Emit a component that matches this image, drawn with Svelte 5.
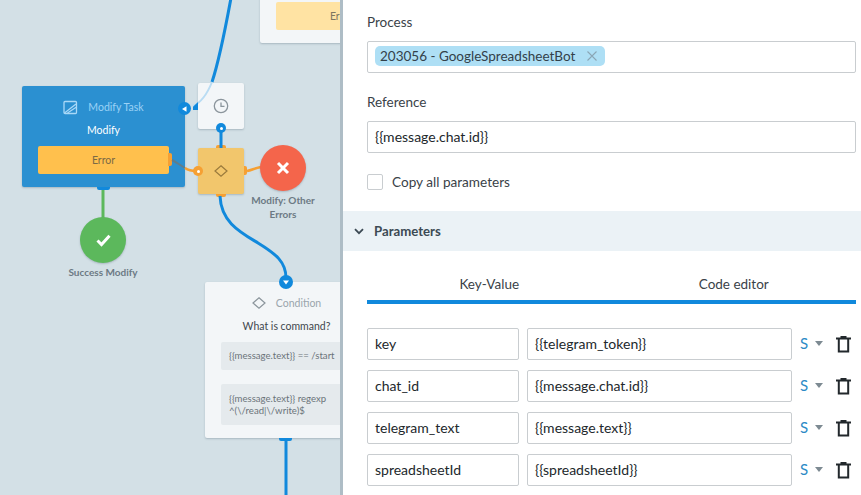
<script>
  const params = [
    { key: 'key', value: '{{telegram_token}}' },
    { key: 'chat_id', value: '{{message.chat.id}}' },
    { key: 'telegram_text', value: '{{message.text}}' },
    { key: 'spreadsheetId', value: '{{spreadsheetId}}' }
  ];
</script>

<div class="page">
  <div class="canvas">
    <svg class="edges" width="340" height="495" viewBox="0 0 340 495">
      <path d="M231 -2C226 25 220 58 212 82" class="blue" />
      <path d="M212 82C206 97 200 103 193 106" class="fade" />
      <path d="M221 128V148" class="blue" />
      <path d="M220 196C221 222 240 232 258 243C276 254 286 262 286 278" class="blue" />
      <path d="M286 438V495" class="blue" />
      <path d="M103 190V218" class="green" />
      <path d="M172 160C176 162 180 165 185 168" class="dark" />
      <path d="M185 168C188 170 191 171 196 171" class="orange" />
      <path d="M247 171C252 170 255 168 261 167" class="orange" />
    </svg>

    <div class="node top-node">
      <div class="bar yellow-light">Error</div>
    </div>

    <div class="node task">
      <div class="head">
        <svg width="15" height="15" viewBox="0 0 15 15" fill="none" stroke="#a9d8f7" stroke-width="1.3">
          <rect x="1" y="1.5" width="12.5" height="12" rx="1" />
          <path d="M1.5 13L13 4M4.5 13L13.5 7" />
        </svg>
        <span>Modify Task</span>
      </div>
      <div class="title">Modify</div>
      <div class="error-bar">Error</div>
    </div>
    <div class="tab tab-task"></div>
    <div class="tab tab-error"></div>

    <div class="node timer">
      <svg width="16" height="16" viewBox="0 0 16 16" fill="none" stroke="#8b959c" stroke-width="1.3">
        <circle cx="8" cy="8" r="6.7" />
        <path d="M8 4.5V8.4H11.5" />
      </svg>
    </div>

    <div class="node switch">
      <svg width="14" height="12" viewBox="0 0 14 12" fill="none" stroke="#9a7a3c" stroke-width="1.2">
        <path d="M7 .8L13 6L7 11.2L1 6Z" />
      </svg>
    </div>
    <div class="tab tab-sw-top"></div>
    <div class="tab tab-sw-bottom"></div>
    <div class="tab tab-sw-right"></div>

    <div class="port port-left">
      <svg width="5" height="6" viewBox="0 0 5 6"><path d="M0 3L4.5 .3V5.7Z" fill="#fff" /></svg>
    </div>
    <div class="wedge"></div>
    <div class="port port-timer"><i></i></div>
    <div class="port port-orange"><i></i></div>
    <div class="port port-cond">
      <svg width="6" height="5" viewBox="0 0 6 5"><path d="M0 .5H6L3 4.5Z" fill="#fff" /></svg>
    </div>

    <div class="circle red">
      <svg width="14" height="14" viewBox="0 0 14 14" stroke="#fff" stroke-width="3" fill="none">
        <path d="M2 2L12 12M12 2L2 12" />
      </svg>
    </div>
    <div class="caption cap-errors">Modify: Other<br />Errors</div>

    <div class="circle success">
      <svg width="15" height="13" viewBox="0 0 15 13" stroke="#fff" stroke-width="3" fill="none">
        <path d="M1.5 6.5L5.5 10.5L13.5 1.8" />
      </svg>
    </div>
    <div class="caption cap-success">Success Modify</div>

    <div class="node cond">
      <div class="head">
        <svg width="14" height="12" viewBox="0 0 14 12" fill="none" stroke="#8b959c" stroke-width="1.2">
          <path d="M7 .8L13 6L7 11.2L1 6Z" />
        </svg>
        <span>Condition</span>
      </div>
      <div class="title">What is command?</div>
      <div class="rule one">{'{{message.text}}'} == /start</div>
      <div class="rule two">{'{{message.text}}'} regexp<br />^(\/read|\/write)$</div>
    </div>
    <div class="tab tab-cond"></div>
  </div>

  <div class="panel">
    <div class="form">
      <label class="label" for="process">Process</label>
      <div class="input" id="process">
        <span class="tag">203056 - GoogleSpreadsheetBot
          <svg width="10" height="10" viewBox="0 0 10 10" stroke="#8aa6b5" stroke-width="1.1" fill="none">
            <path d="M.5 .5L9.5 9.5M9.5 .5L.5 9.5" />
          </svg>
        </span>
      </div>
      <label class="label ref" for="reference">Reference</label>
      <div class="input text" id="reference">{'{{message.chat.id}}'}</div>
      <div class="check">
        <span class="box"></span>
        <span>Copy all parameters</span>
      </div>
    </div>

    <div class="section">
      <svg width="10" height="7" viewBox="0 0 10 7" fill="none" stroke="#3c4a54" stroke-width="1.8">
        <path d="M1 1.2L5 5.2L9 1.2" />
      </svg>
      <span>Parameters</span>
    </div>

    <div class="body">
      <div class="tabs">
        <span>Key-Value</span>
        <span>Code editor</span>
      </div>
      <div class="rows">
        {#each params as p}
          <div class="row">
            <div class="input text key">{p.key}</div>
            <div class="input text val">{p.value}</div>
            <span class="type">S</span>
            <span class="caret"></span>
            <svg class="trash" width="15" height="17" viewBox="0 0 15 17" fill="none" stroke="#22282c" stroke-width="2">
              <path d="M0 2.5H15M5.5 2.5V.6H9.5V2.5M2.8 2.5V15.5H12.2V2.5" />
            </svg>
          </div>
        {/each}
      </div>
    </div>
  </div>
</div>

<style>
  :global(body) {
    margin: 0;
  }
  .page {
    display: flex;
    width: 861px;
    height: 495px;
    overflow: hidden;
    font-family: Lato, "Noto Sans", sans-serif;
    color: #3a4248;
  }

  /* diagram */
  .canvas {
    position: relative;
    flex: 0 0 340px;
    height: 495px;
    overflow: hidden;
    background: #d3e0e6;
  }
  .edges {
    position: absolute;
    left: 0;
    top: 0;
    z-index: 1;
    fill: none;
  }
  .blue { stroke: #1189dc; stroke-width: 3; }
  .fade { stroke: #b9dcf3; stroke-width: 2; }
  .green { stroke: #5cb85c; stroke-width: 3; }
  .orange { stroke: #f6a033; stroke-width: 2.5; }
  .dark { stroke: #5f7d8c; stroke-width: 2; }
  .node {
    position: absolute;
    box-sizing: border-box;
    border-radius: 2px;
    box-shadow: 0 1px 2px rgba(70, 90, 105, 0.3);
  }
  .top-node {
    left: 260px;
    top: -10px;
    width: 163px;
    height: 53px;
    background: #f3f6f8;
  }
  .bar {
    position: absolute;
    left: 16px;
    top: 12px;
    width: 131px;
    height: 28px;
    border-radius: 2px;
    font-size: 10.5px;
    line-height: 28px;
    text-align: center;
    color: #7d7660;
  }
  .yellow-light {
    background: #ffe3a3;
  }
  .task {
    left: 22px;
    top: 86px;
    width: 163px;
    height: 101px;
    padding-top: 13px;
    background: #2b90d1;
  }
  .head {
    display: flex;
    justify-content: center;
    align-items: center;
    gap: 10px;
    height: 16px;
    font-size: 10.5px;
    color: #9bd2f6;
  }
  .title {
    margin-top: 7px;
    font-size: 10.5px;
    line-height: 16px;
    text-align: center;
    color: #fff;
  }
  .error-bar {
    height: 28px;
    margin: 8px 16px 0;
    border-radius: 2px;
    background: #ffc04d;
    font-size: 10.5px;
    line-height: 28px;
    text-align: center;
    color: #7a6a45;
  }
  .timer,
  .switch {
    left: 198px;
    width: 46px;
    height: 46px;
    display: flex;
    align-items: center;
    justify-content: center;
  }
  .timer {
    top: 83px;
    background: #f3f6f8;
  }
  .switch {
    top: 148px;
    background: #f2c66c;
  }
  .tab {
    position: absolute;
    background: #f6a033;
  }
  .tab-task {
    left: 97px;
    top: 187px;
    width: 13px;
    height: 3px;
    border-radius: 0 0 2px 2px;
    background: #1189dc;
  }
  .tab-error {
    left: 168px;
    top: 153px;
    width: 4px;
    height: 13px;
    border-radius: 0 2px 2px 0;
  }
  .tab-sw-top {
    left: 216px;
    top: 145px;
    width: 10px;
    height: 3px;
    border-radius: 2px 2px 0 0;
  }
  .tab-sw-bottom {
    left: 216px;
    top: 194px;
    width: 10px;
    height: 3px;
    border-radius: 0 0 2px 2px;
  }
  .tab-sw-right {
    left: 244px;
    top: 166px;
    width: 3px;
    height: 9px;
    border-radius: 0 2px 2px 0;
  }
  .tab-cond {
    left: 279px;
    top: 438px;
    width: 13px;
    height: 3px;
    border-radius: 0 0 2px 2px;
    background: #1189dc;
  }
  .port {
    position: absolute;
    z-index: 2;
    display: flex;
    align-items: center;
    justify-content: center;
    border-radius: 50%;
    background: #1189dc;
  }
  .port i {
    width: 3px;
    height: 3px;
    border-radius: 50%;
    background: #fff;
  }
  .port-left {
    left: 178px;
    top: 102px;
    width: 13px;
    height: 13px;
  }
  .wedge {
    position: absolute;
    z-index: 2;
    left: 193px;
    top: 102px;
    width: 5px;
    height: 8px;
    background: #1189dc;
    clip-path: polygon(100% 0, 100% 100%, 0 100%, 0 60%);
  }
  .port-timer {
    left: 216px;
    top: 123px;
    width: 10px;
    height: 10px;
  }
  .port-orange {
    left: 193px;
    top: 166px;
    width: 10px;
    height: 10px;
    background: #f6a033;
  }
  .port-cond {
    left: 279px;
    top: 275px;
    width: 14px;
    height: 14px;
  }
  .circle {
    position: absolute;
    z-index: 2;
    display: flex;
    align-items: center;
    justify-content: center;
    width: 46px;
    height: 46px;
    border-radius: 50%;
    box-shadow: 0 1px 2px rgba(70, 90, 105, 0.3);
  }
  .red {
    left: 260px;
    top: 145px;
    background: #f4654b;
  }
  .success {
    left: 80px;
    top: 217px;
    background: #5cb85c;
  }
  .caption {
    position: absolute;
    width: 110px;
    font-size: 10px;
    font-weight: 700;
    line-height: 14px;
    text-align: center;
    color: #6c7a84;
  }
  .cap-errors {
    left: 228px;
    top: 193px;
  }
  .cap-success {
    left: 48px;
    top: 265px;
  }
  .cond {
    left: 205px;
    top: 282px;
    width: 163px;
    height: 156px;
    padding-top: 13px;
    background: #f3f6f8;
  }
  .cond .head {
    color: #9aa5ac;
  }
  .cond .title {
    color: #3f474d;
  }
  .rule {
    margin: 0 16px;
    padding: 0 8px;
    border-radius: 2px;
    background: #e5eaed;
    font-size: 9.6px;
    line-height: 12px;
    color: #6b747a;
  }
  .one {
    margin-top: 8px;
    padding-top: 8px;
    height: 20px;
  }
  .two {
    margin-top: 14px;
    padding-top: 9px;
    height: 32px;
  }

  /* side panel */
  .panel {
    flex: 1;
    box-sizing: border-box;
    height: 495px;
    overflow: hidden;
    border-left: 3px solid #aebdc6;
    background: #fff;
  }
  .form {
    padding: 12px 5px 0 24px;
    height: 199px;
  }
  .label {
    display: block;
    height: 20px;
    margin-bottom: 9px;
    font-size: 13.5px;
    line-height: 20px;
  }
  .ref {
    margin-top: 19px;
  }
  .input {
    box-sizing: border-box;
    height: 32px;
    padding: 3px 7px;
    border: 1px solid #c9cdd0;
    border-radius: 2px;
    background: #fff;
  }
  .text {
    padding: 0 7px;
    font-size: 14px;
    line-height: 30px;
    color: #22282c;
  }
  .tag {
    display: inline-flex;
    align-items: center;
    gap: 12px;
    height: 20px;
    padding: 0 8px 0 5px;
    border-radius: 5px;
    background: #aedff5;
    font-size: 13.5px;
    color: #33414a;
  }
  .check {
    display: flex;
    align-items: center;
    gap: 9px;
    margin-top: 21px;
    font-size: 13.6px;
  }
  .box {
    box-sizing: border-box;
    width: 16px;
    height: 16px;
    border: 1px solid #c9cdd0;
    border-radius: 2px;
  }
  .section {
    display: flex;
    align-items: center;
    gap: 10px;
    height: 40px;
    padding-left: 11px;
    background: #ebf2f6;
    font-size: 13.2px;
    font-weight: 700;
    color: #3c4a54;
  }
  .body {
    padding: 0 5px 0 24px;
  }
  .tabs {
    display: grid;
    grid-template-columns: 1fr 1fr;
    height: 49px;
    border-bottom: 4px solid #1189dc;
    font-size: 13.5px;
    line-height: 66px;
    text-align: center;
  }
  .rows {
    display: flex;
    flex-direction: column;
    gap: 10px;
    margin-top: 24px;
  }
  .row {
    display: flex;
    align-items: center;
  }
  .key {
    width: 152px;
  }
  .val {
    width: 265px;
    margin-left: 8px;
  }
  .type {
    margin-left: 8px;
    width: 15px;
    margin-top: -3px;
    font-size: 15px;
    color: #2b8ac6;
  }
  .caret {
    width: 0;
    height: 0;
    margin-top: -2px;
    border-left: 4px solid transparent;
    border-right: 4px solid transparent;
    border-top: 5px solid #7d8a92;
  }
  .trash {
    margin-left: 13px;
  }
</style>
